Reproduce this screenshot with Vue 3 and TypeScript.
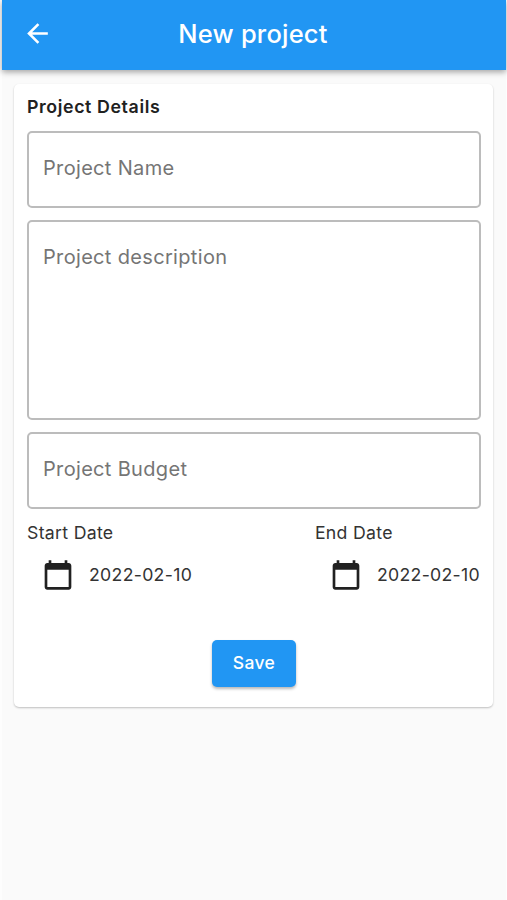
<script setup lang="ts">
import { reactive } from 'vue'

interface ProjectForm {
  name: string
  description: string
  budget: string
}

interface DateField {
  label: string
  value: string
}

const form = reactive<ProjectForm>({ name: '', description: '', budget: '' })

const dates: DateField[] = [
  { label: 'Start Date', value: '2022-02-10' },
  { label: 'End Date', value: '2022-02-10' },
]
</script>

<template>
  <div class="screen">
    <header class="app-bar">
      <button class="back" type="button" aria-label="Back">
        <svg viewBox="0 0 24 24" width="31" height="31">
          <path d="M20 11H7.83l5.59-5.59L12 4l-8 8 8 8 1.41-1.41L7.83 13H20v-2z" fill="currentColor" />
        </svg>
      </button>
      <h1 class="title">New project</h1>
    </header>

    <form class="card" @submit.prevent>
      <h2 class="heading">Project Details</h2>
      <input v-model="form.name" class="field" type="text" placeholder="Project Name" />
      <textarea v-model="form.description" class="field area" placeholder="Project description"></textarea>
      <input v-model="form.budget" class="field" type="text" placeholder="Project Budget" />

      <div class="dates">
        <div v-for="date in dates" :key="date.label" class="date">
          <span class="date-label">{{ date.label }}</span>
          <div class="date-row">
            <svg viewBox="0 0 24 24" width="32" height="32">
              <path
                d="M20 3h-1V1h-2v2H7V1H5v2H4c-1.1 0-2 .9-2 2v16c0 1.1.9 2 2 2h16c1.1 0 2-.9 2-2V5c0-1.1-.9-2-2-2zm0 18H4V8h16v13z"
                fill="currentColor"
              />
            </svg>
            <span class="date-value">{{ date.value }}</span>
          </div>
        </div>
      </div>

      <button class="save" type="submit">Save</button>
    </form>
  </div>
</template>

<style>
body {
  background: #fafafa;
}
</style>

<style scoped>
.screen {
  box-sizing: border-box;
  height: 900px;
  border-left: 2px solid #fdfdfd;
  border-right: 1px solid #fdfdfd;
  background: #fafafa;
  font-family: Inter, "Liberation Sans", sans-serif;
  color: #212121;
}

.app-bar {
  display: grid;
  grid-template-columns: 71px 1fr 73px;
  align-items: center;
  box-sizing: border-box;
  height: 70px;
  padding-bottom: 3px;
  background: #2196f3;
  color: #fff;
  box-shadow: 0 2px 6px rgba(0, 0, 0, 0.36);
}

.back {
  display: flex;
  width: 31px;
  margin-left: 20px;
  padding: 0;
  border: 0;
  background: none;
  color: inherit;
}

.title {
  margin: 0;
  font-size: 25.5px;
  font-weight: 500;
  line-height: 32px;
  letter-spacing: 0.2px;
  text-align: center;
}

.card {
  display: flex;
  flex-direction: column;
  box-sizing: border-box;
  height: 623px;
  margin: 14px 13px 0 12px;
  padding: 11px 12px 0 13px;
  border-radius: 5px;
  background: #fff;
  box-shadow: 0 1px 2px rgba(0, 0, 0, 0.24);
}

.heading {
  margin: 0 0 13px;
  font-size: 17.8px;
  font-weight: 600;
  line-height: 23px;
  letter-spacing: 0.6px;
}

.field {
  box-sizing: border-box;
  flex: none;
  width: 100%;
  height: 77px;
  margin: 0 0 12px;
  padding: 0 14px 4px;
  border: 2px solid #bcbcbc;
  border-radius: 5px;
  outline: none;
  background: #fff;
  font-family: inherit;
  font-size: 20px;
  line-height: 26px;
  letter-spacing: 0.33px;
  color: inherit;
  resize: none;
}

.field::placeholder {
  color: #757575;
  opacity: 1;
}

.area {
  height: 200px;
  padding-top: 22px;
}

.dates {
  display: flex;
  justify-content: space-between;
  padding-right: 1px;
}

.date-label {
  display: block;
  font-size: 17.7px;
  line-height: 24px;
  letter-spacing: 0.3px;
  color: #333;
}

.date-row {
  display: flex;
  align-items: center;
  gap: 15px;
  margin-top: 14px;
  padding-left: 15px;
}

.date-value {
  font-size: 17.7px;
  line-height: 24px;
  letter-spacing: 0.3px;
  color: #333;
}

.save {
  align-self: center;
  width: 84px;
  height: 47px;
  margin-top: 49px;
  padding: 0 0 2px;
  border: 0;
  border-radius: 5px;
  background: #2196f3;
  box-shadow: 0 2px 3px rgba(0, 0, 0, 0.28);
  font-family: inherit;
  font-size: 17.5px;
  font-weight: 500;
  letter-spacing: 0.4px;
  color: #fff;
}
</style>
